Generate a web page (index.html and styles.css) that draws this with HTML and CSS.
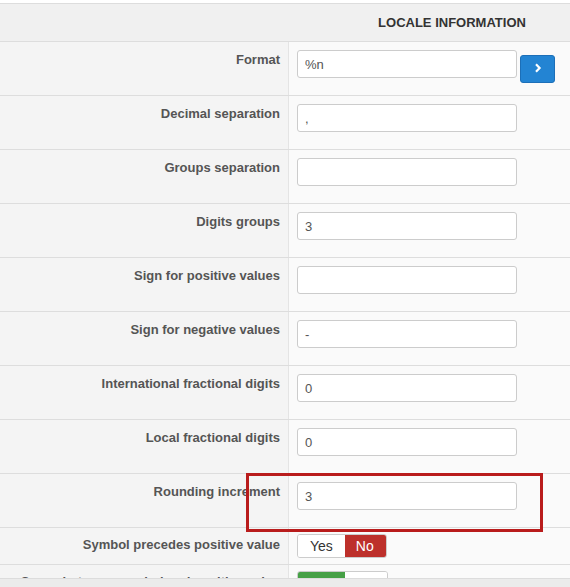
FILE: index.html
```
<!DOCTYPE html>
<html lang="en">

<head>
    <meta charset="UTF-8">
    <meta name="viewport" content="width=device-width, initial-scale=1.0">
    <title>Locale information</title>
    <link rel="stylesheet" href="styles.css">
</head>

<body>
    <div class="view">
        <div class="panel">
            <div class="panel-head">
                <span></span>
                <span class="title">Locale information</span>
            </div>

            <div class="row">
                <label class="key">Format</label>
                <div class="val">
                    <input class="field" type="text" value="%n">
                    <button class="go">
                        <svg width="8" height="10" viewBox="0 0 8 10"><path d="M2 1.2l3.6 3.8L2 8.8" fill="none" stroke="#fff" stroke-width="2.2"/></svg>
                    </button>
                </div>
            </div>
            <div class="row">
                <label class="key">Decimal separation</label>
                <div class="val"><input class="field" type="text" value=","></div>
            </div>
            <div class="row">
                <label class="key">Groups separation</label>
                <div class="val"><input class="field" type="text" value=""></div>
            </div>
            <div class="row">
                <label class="key">Digits groups</label>
                <div class="val"><input class="field" type="text" value="3"></div>
            </div>
            <div class="row">
                <label class="key">Sign for positive values</label>
                <div class="val"><input class="field" type="text" value=""></div>
            </div>
            <div class="row">
                <label class="key">Sign for negative values</label>
                <div class="val"><input class="field" type="text" value="-"></div>
            </div>
            <div class="row">
                <label class="key">International fractional digits</label>
                <div class="val"><input class="field" type="text" value="0"></div>
            </div>
            <div class="row">
                <label class="key">Local fractional digits</label>
                <div class="val"><input class="field" type="text" value="0"></div>
            </div>
            <div class="row">
                <label class="key">Rounding increment</label>
                <div class="val"><input class="field" type="text" value="3"></div>
            </div>

            <div class="row row-sm">
                <label class="key">Symbol precedes positive value</label>
                <div class="val">
                    <div class="toggle">
                        <span class="opt">Yes</span>
                        <span class="opt no on">No</span>
                    </div>
                </div>
            </div>
            <div class="row row-sm">
                <label class="key">Space between symbol and positive value</label>
                <div class="val">
                    <div class="toggle">
                        <span class="opt yes on">Yes</span>
                        <span class="opt">No</span>
                    </div>
                </div>
            </div>

            <!-- highlight box -->
            <div class="mark"></div>
        </div>
    </div>
    <div class="hbar"></div>
</body>

</html>
```

FILE: styles.css
```
* {
    padding: 0;
    margin: 0;
    box-sizing: border-box;
}

body {
    height: 100vh;
    display: flex;
    flex-direction: column;
    overflow: hidden;
    background: #fff;
    font-family: "Liberation Sans", Arial, sans-serif;
    font-size: 13px;
    line-height: 1.42857;
    color: #333;
}

.view {
    flex: 1;
    overflow: hidden;
    padding-top: 3px;
}

.panel {
    position: relative;
    width: 615px;
    border-top: 1px solid #ddd;
}

.panel-head {
    display: grid;
    grid-template-columns: 289px 1fr;
    height: 38px;
    background: #f0f0f0;
    border-bottom: 1px solid #ddd;
}

.title {
    text-align: center;
    text-transform: uppercase;
    font-weight: bold;
    color: #333;
    padding-top: 10px;
}

.row {
    display: grid;
    grid-template-columns: 289px 1fr;
    height: 54px;
    border-bottom: 1px solid #ddd;
}

.row-sm {
    height: 37px;
}

.key {
    display: block;
    background: #f4f4f4;
    border-right: 1px solid #e4e4e4;
    text-align: right;
    font-weight: bold;
    color: #555;
    padding: 9px 8px 0 0;
    white-space: nowrap;
}

.row-sm .key {
    padding-top: 8px;
}

.val {
    display: flex;
    align-items: flex-start;
    background: #fafafa;
    padding: 8px 0 0 8px;
}

.row-sm .val {
    padding-top: 6px;
}

.field {
    width: 220px;
    height: 28px;
    border: 1px solid #ccc;
    border-radius: 3px;
    background: #fff;
    padding: 0 7px;
    font-family: inherit;
    font-size: 13px;
    color: #555;
}

.go {
    width: 35px;
    height: 28px;
    margin: 5px 0 0 3px;
    border: 1px solid #1c6fb8;
    border-radius: 3px;
    background: #2384d3;
    display: flex;
    align-items: center;
    justify-content: center;
    padding-bottom: 3px;
}

.toggle {
    display: flex;
    border: 1px solid #ccc;
    border-radius: 3px;
    overflow: hidden;
    height: 24px;
}

.opt {
    display: block;
    padding: 0 12px;
    font-size: 14px;
    line-height: 22px;
    background: #fff;
    color: #333;
}

.opt.on {
    color: #fff;
}

.opt.no {
    background: #bd302b;
    padding: 0 12px 0 11px;
}

.opt.yes {
    background: #46a046;
}

.mark {
    position: absolute;
    left: 246px;
    top: 469px;
    width: 297px;
    height: 59px;
    border: 3px solid #b91c1c;
}

.hbar {
    height: 9px;
    background: #ebebeb;
    border-top: 1px solid #dcdcdc;
}
```
